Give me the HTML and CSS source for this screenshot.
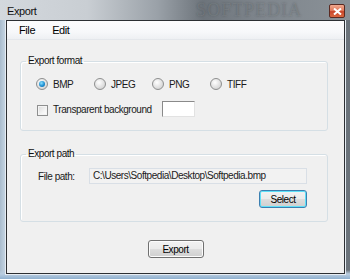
FILE: index.html
```html
<!DOCTYPE html>
<html lang="en">
<head>
    <meta charset="UTF-8">
    <title>Export</title>
    <link rel="stylesheet" href="styles.css">
</head>
<body>
    <div class="window">
        <div class="titlebar">
            <span class="title">Export</span>
            <span class="watermark">SOFTPEDIA</span>
            <span class="close">
                <svg width="9" height="7" viewBox="0 0 9 7">
                    <path d="M1 0.5 L8 6.5 M8 0.5 L1 6.5" stroke="#fff" stroke-width="2"/>
                </svg>
            </span>
        </div>
        <div class="client">
            <div class="menubar">
                <span class="menu-item">File</span>
                <span class="menu-item">Edit</span>
            </div>

            <fieldset class="group format-group">
                <legend>Export format</legend>
                <div class="group-body">
                    <div class="radio-row">
                        <label class="radio-item"><span class="radio checked"></span>BMP</label>
                        <label class="radio-item"><span class="radio"></span>JPEG</label>
                        <label class="radio-item"><span class="radio"></span>PNG</label>
                        <label class="radio-item"><span class="radio"></span>TIFF</label>
                    </div>
                    <div class="check-row">
                        <span class="checkbox"></span>
                        <span class="check-label">Transparent background</span>
                        <span class="color-box"></span>
                    </div>
                </div>
            </fieldset>

            <fieldset class="group path-group">
                <legend>Export path</legend>
                <div class="group-body">
                    <div class="path-row">
                        <span class="path-label">File path:</span>
                        <span class="path-box">C:\Users\Softpedia\Desktop\Softpedia.bmp</span>
                    </div>
                    <div class="select-row">
                        <button class="btn select-btn">Select</button>
                    </div>
                </div>
            </fieldset>

            <div class="footer">
                <button class="btn export-btn">Export</button>
            </div>
        </div>
    </div>
</body>
</html>
```

FILE: styles.css
```css
* {
    margin: 0;
    padding: 0;
    box-sizing: border-box;
}

body {
    width: 350px;
    height: 279px;
    overflow: hidden;
    font-family: "Liberation Sans", Arial, sans-serif;
    font-size: 10px;
    letter-spacing: -0.45px;
    color: #1a1a1a;
}

.window {
    width: 350px;
    height: 279px;
    display: flex;
    flex-direction: column;
    padding: 0 5px 5px 5px;
    background:
        linear-gradient(180deg, rgba(0,0,0,0) 270px, #b9cde0 274px, #8fb0cf 279px),
        linear-gradient(90deg, #a9bccd 0px, #c3d3e1 5px, #7f878f 50%, #6b737b 100%);
}

.titlebar {
    position: relative;
    height: 20px;
    flex: none;
    display: flex;
    align-items: center;
    margin: 0 -5px;
    padding: 0 5px 0 7px;
    background: linear-gradient(90deg, #d3d8dd 0%, #c9ced3 25%, #9aa1a8 45%, #6d747b 58%, #7f868d 75%, #8a9197 100%);
}

.title {
    font-size: 11px;
    letter-spacing: -0.4px;
    color: #111;
    padding-top: 1px;
}

.watermark {
    position: absolute;
    left: 196px;
    top: 0;
    font-size: 18px;
    line-height: 20px;
    font-family: "Liberation Serif", serif;
    letter-spacing: 1px;
    color: rgba(255, 255, 255, 0.1);
    text-shadow: 0 0 2px rgba(40, 45, 50, 0.35);
}

.close {
    margin-left: auto;
    margin-top: 2px;
    width: 16px;
    height: 14px;
    display: flex;
    align-items: center;
    justify-content: center;
    border: 1px solid #5a2a22;
    border-radius: 2px;
    background: linear-gradient(180deg, #f0a88f 0%, #e07a5c 45%, #c9452a 55%, #d9673f 100%);
}

.client {
    flex: 1;
    margin-left: 1px;
    border: 1px solid #2c2f33;
    box-shadow: 0 0 0 1px #e6ecf2;
    background: #f0f0f0;
    display: flex;
    flex-direction: column;
}

.menubar {
    height: 19px;
    flex: none;
    display: flex;
    align-items: center;
    padding-left: 5px;
    background: linear-gradient(180deg, #fcfcfd 0%, #f7f8fa 60%, #eef0f3 100%);
    border-bottom: 1px solid #e4e7eb;
}

.menu-item {
    font-size: 11px;
    letter-spacing: -0.4px;
    padding: 0 7px;
    margin-right: 3px;
    color: #000;
}

.group {
    border: 1px solid #d5dfe5;
    border-radius: 3px;
    box-shadow: inset 1px 1px 0 #fff;
    margin: 0 16px 0 13px;
}

.group legend {
    margin-left: 5px;
    padding: 0 2px;
    line-height: 12px;
    color: #111;
}

.format-group {
    margin-top: 15px;
}

.format-group .group-body {
    padding: 10px 0 13px 15px;
}

.radio-row {
    display: flex;
    align-items: center;
    height: 14px;
}

.radio-item {
    width: 58px;
    display: flex;
    align-items: center;
    gap: 5px;
}

.radio {
    width: 12px;
    height: 12px;
    border-radius: 50%;
    border: 1px solid #8e8f8f;
    background: radial-gradient(circle at 40% 35%, #ffffff 0%, #e6e6e6 45%, #c9c9c9 100%);
    display: flex;
    align-items: center;
    justify-content: center;
}

.radio.checked::after {
    content: "";
    width: 6px;
    height: 6px;
    border-radius: 50%;
    background: radial-gradient(circle at 40% 35%, #8be0ff 0%, #1c8fd2 55%, #0e5f98 100%);
}

.check-row {
    display: flex;
    align-items: center;
    margin-top: 10px;
    margin-left: 1px;
}

.checkbox {
    width: 11px;
    height: 11px;
    border: 1px solid #8e8f8f;
    background: linear-gradient(135deg, #d8d8d8 0%, #f4f4f4 60%, #ffffff 100%);
    box-shadow: inset 0 0 0 1px #f4f4f4;
    margin-top: 2px;
}

.check-label {
    margin-left: 5px;
}

.color-box {
    width: 33px;
    height: 16px;
    margin-left: 10px;
    background: #fff;
    border: 1px solid;
    border-color: #8a8a8a #e2e2e2 #e2e2e2 #8a8a8a;
}

.path-group {
    margin-top: 17px;
}

.path-group .group-body {
    padding: 8px 20px 13px 17px;
}

.path-row {
    display: flex;
    align-items: center;
    height: 16px;
}

.path-label {
    width: 51px;
}

.path-box {
    flex: 1;
    height: 16px;
    line-height: 14px;
    padding-left: 3px;
    border: 1px solid #d9dfe6;
    background: #f2f2f2;
}

.select-row {
    display: flex;
    justify-content: flex-end;
    margin-top: 6px;
}

.btn {
    font-family: "Liberation Sans", Arial, sans-serif;
    font-size: 10px;
    letter-spacing: -0.45px;
    color: #000;
    height: 18px;
    border: 1px solid #707070;
    border-radius: 3px;
    box-shadow: inset 0 0 0 1px #fcfcfc;
    background: linear-gradient(180deg, #f2f2f2 0%, #ebebeb 48%, #dddddd 52%, #cfcfcf 100%);
}

.select-btn {
    width: 48px;
    border-color: #3c7fb1;
    box-shadow: inset 0 0 0 1px #5ee0f8;
}

.footer {
    display: flex;
    justify-content: center;
    margin-top: 18px;
}

.export-btn {
    width: 56px;
}
```
